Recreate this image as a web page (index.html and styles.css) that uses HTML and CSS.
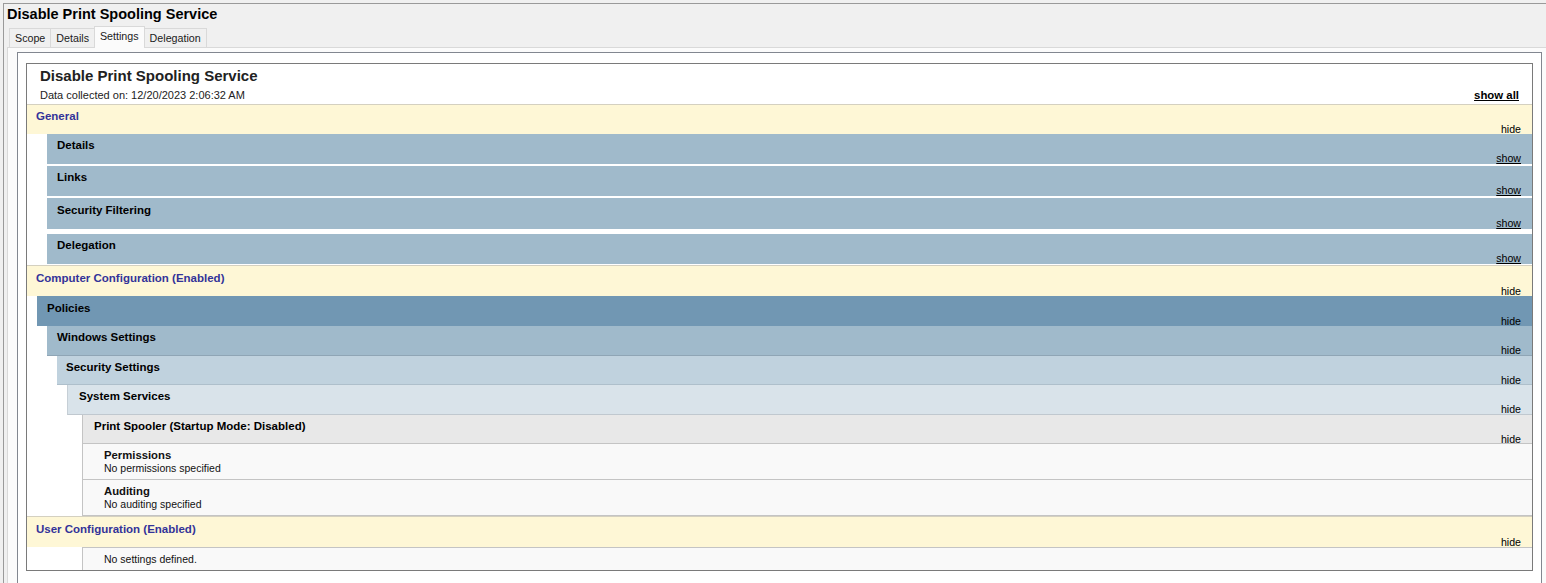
FILE: index.html
```html
<!DOCTYPE html>
<html lang="en">
<head>
  <meta charset="UTF-8">
  <title>Disable Print Spooling Service</title>
  <link rel="stylesheet" href="styles.css">
</head>
<body>

  <div class="window">
    <div class="win-title">Disable Print Spooling Service</div>

    <div class="tabs">
      <div class="tab">Scope</div>
      <div class="tab">Details</div>
      <div class="tab active">Settings</div>
      <div class="tab">Delegation</div>
    </div>

    <div class="tab-panel">
      <div class="frame">
        <div class="report">

          <div class="report-head">
            <div class="report-title">Disable Print Spooling Service</div>
            <div class="report-meta">
              <span>Data collected on: 12/20/2023 2:06:32 AM</span>
              <a class="show-all">show all</a>
            </div>
          </div>

          <!-- General -->
          <div class="hd he0">
            <div class="label">General</div>
            <div class="toggle">hide</div>
          </div>
          <div class="hd he1 ind-20">
            <div class="label">Details</div>
            <div class="toggle"><a>show</a></div>
          </div>
          <div class="hd he1 ind-20 sp2">
            <div class="label">Links</div>
            <div class="toggle"><a>show</a></div>
          </div>
          <div class="hd he1 ind-20 sp2 tall">
            <div class="label">Security Filtering</div>
            <div class="toggle"><a>show</a></div>
          </div>
          <div class="hd he1 ind-20 sp5">
            <div class="label">Delegation</div>
            <div class="toggle"><a>show</a></div>
          </div>

          <!-- Computer Configuration -->
          <div class="hd he0 sp1 tall">
            <div class="label">Computer Configuration (Enabled)</div>
            <div class="toggle">hide</div>
          </div>
          <div class="hd he1h ind-10 low">
            <div class="label">Policies</div>
            <div class="toggle">hide</div>
          </div>
          <div class="hd he1 ind-20 line">
            <div class="label">Windows Settings</div>
            <div class="toggle">hide</div>
          </div>
          <div class="hd he2 ind-30">
            <div class="label">Security Settings</div>
            <div class="toggle">hide</div>
          </div>
          <div class="hd he3 ind-40">
            <div class="label">System Services</div>
            <div class="toggle">hide</div>
          </div>
          <div class="hd he4 ind-55">
            <div class="label">Print Spooler (Startup Mode: Disabled)</div>
            <div class="toggle">hide</div>
          </div>
          <div class="he4i ind-55">
            <div class="item-name">Permissions</div>
            <div class="item-val">No permissions specified</div>
          </div>
          <div class="he4i ind-55">
            <div class="item-name">Auditing</div>
            <div class="item-val">No auditing specified</div>
          </div>

          <!-- User Configuration -->
          <div class="hd he0 tall">
            <div class="label">User Configuration (Enabled)</div>
            <div class="toggle">hide</div>
          </div>
          <div class="empty ind-55">No settings defined.</div>

        </div>
      </div>
    </div>
  </div>

</body>
</html>
```

FILE: styles.css
```css
* { box-sizing: border-box; margin: 0; padding: 0; }
html, body { height: 100%; overflow: hidden; }
body {
  font-family: "Liberation Sans", Arial, sans-serif;
  background: #f0f0f0;
  color: #000;
}

/* window chrome */
.window {
  margin: 3px 0 0 3px;
  height: 580px;
  border-top: 1px solid #9a9a9a;
  border-left: 1px solid #9a9a9a;
  background: #f0f0f0;
}
.win-title {
  padding-left: 3px;
  height: 22px;
  line-height: 21px;
  font-size: 14.5px;
  font-weight: bold;
}
.tabs {
  display: flex;
  align-items: flex-end;
  height: 21px;
  margin-left: 5px;
}
.tab {
  height: 19px;
  padding: 0 5px;
  border: 1px solid #d9d9d9;
  border-bottom: none;
  margin-right: -1px;
  background: #f0f0f0;
  font-size: 10.7px;
  line-height: 19px;
  color: #1a1a1a;
}
.tab.active {
  height: 22px;
  margin-bottom: -1px;
  padding: 0 5px;
  background: #fbfbfb;
  line-height: 19px;
  position: relative;
  z-index: 1;
}
.tab-panel {
  margin-left: 3px;
  height: 536px;
  padding: 4px 4px 0 9px;
  border-top: 1px solid #d9d9d9;
  border-left: 1px solid #d9d9d9;
  background: #fbfbfb;
}
.frame {
  height: 531px;
  padding: 10px 8px 0 8px;
  border: 1px solid #828790;
  border-bottom: none;
  background: #fff;
}

/* report */
.report {
  border: 1px solid #7a7a7a;
  background: #fff;
}
.report-head { padding: 3px 13px 2px 13px; }
.report-title {
  font-size: 15px;
  font-weight: bold;
  line-height: 18px;
  color: #222;
}
.report-meta {
  display: flex;
  justify-content: space-between;
  margin-top: 3px;
  font-size: 11px;
  line-height: 14px;
  color: #222;
}
.show-all {
  font-weight: bold;
  font-size: 11.4px;
  text-decoration: underline;
  color: #000;
}

.hd {
  height: 30px;
  padding: 4px 11px 0 9px;
  font-size: 11.5px;
}
.hd .label { font-weight: bold; line-height: 14px; }
.hd .toggle {
  text-align: right;
  font-size: 10.6px;
  line-height: 13px;
}
.hd .toggle a { text-decoration: underline; color: #000; }

.he0 {
  border-top: 1px solid #d4d0c0;
  background: #fef7d6;
}
.he0 .label { color: #333399; }
.he1 { background: #a0bacb; padding-left: 10px; }
.he1h { background: #7197b3; padding-left: 10px; }
.he2 { height: 29px; background: #c0d2de; border-bottom: 1px solid #aebfcb; }
.he3 { background: #d9e3ea; border-left: 1px solid #c6cfd6; border-bottom: 1px solid #c0c8cf; padding-left: 11px; }
.he4 {
  height: 29px;
  background: #e8e8e8;
  border-left: 1px solid #c4c4c4;
  border-bottom: 1px solid #c4c4c4;
  padding-left: 11px;
}
.line { border-bottom: 1px solid #8fa5b5; }

.he4i {
  height: 36px;
  padding: 4px 0 0 21px;
  background: #f9f9f9;
  border-left: 1px solid #c4c4c4;
  border-bottom: 1px solid #c4c4c4;
  font-size: 10.5px;
  line-height: 14px;
  color: #111;
}
.item-name { font-weight: bold; font-size: 11.3px; }
.item-val { line-height: 13px; }

.empty {
  height: 23px;
  padding-left: 21px;
  background: #f9f9f9;
  border-top: 1px solid #c4c4c4;
  border-left: 1px solid #c4c4c4;
  font-size: 10.5px;
  line-height: 22px;
  color: #111;
}

/* indent levels */
.ind-10 { margin-left: 10px; }
.ind-20 { margin-left: 20px; }
.ind-30 { margin-left: 30px; }
.ind-40 { margin-left: 40px; }
.ind-55 { margin-left: 55px; }

.sp1 { margin-top: 1px; }
.sp2 { margin-top: 2px; }
.sp5 { margin-top: 5px; }
.tall { height: 31px; padding-top: 5px; }
.low { padding-top: 5px; }
```
